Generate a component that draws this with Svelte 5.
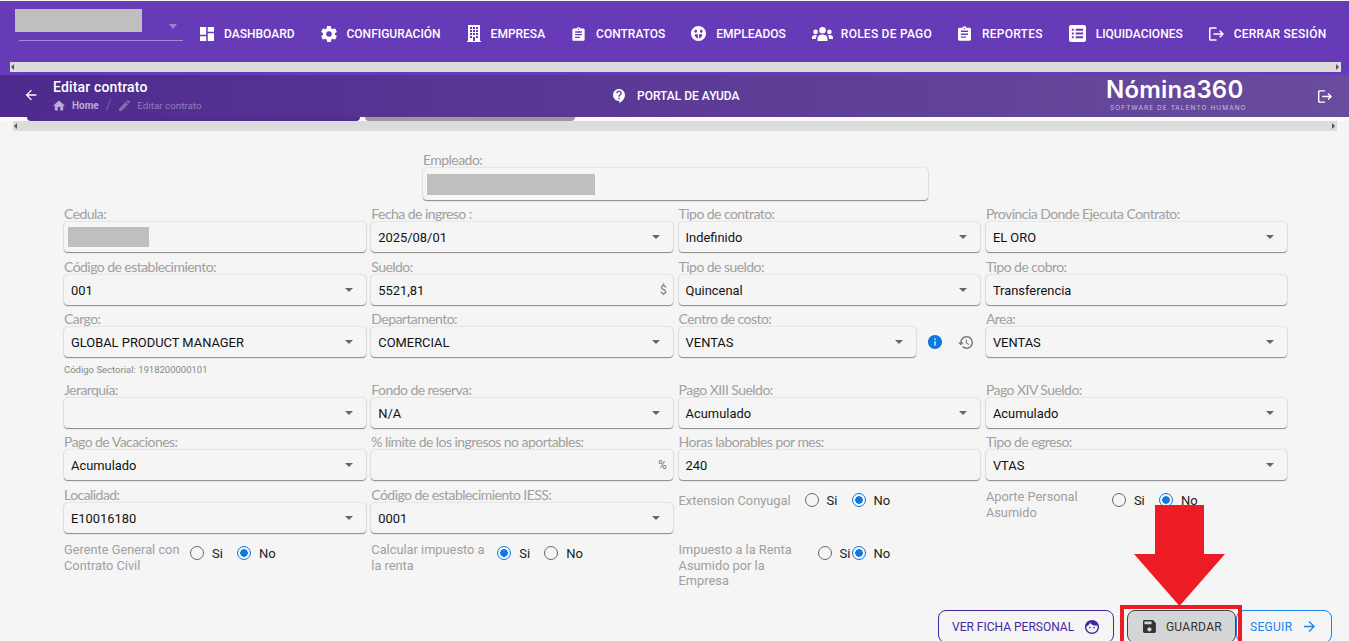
<script>
  const clipboard = "M19 3h-4.18C14.4 1.84 13.3 1 12 1s-2.4.84-2.82 2H5c-1.1 0-2 .9-2 2v14c0 1.1.9 2 2 2h14c1.1 0 2-.9 2-2V5c0-1.1-.9-2-2-2zm-7 0c.55 0 1 .45 1 1s-.45 1-1 1-1-.45-1-1 .45-1 1-1zm2 14H7v-2h7v2zm3-4H7v-2h10v2zm0-4H7V7h10v2z";

  const nav = [
    { key: "dashboard", label: "DASHBOARD", box: "3 3 18 18", w: 14, h: 14, d: "M3 13h8V3H3v10zm0 8h8v-6H3v6zm10 0h8V11h-8v10zm0-18v6h8V3h-8z" },
    { key: "config", label: "CONFIGURACIÓN", box: "2 2 20 20", w: 16, h: 16, d: "M12,15.5A3.5,3.5 0 0,1 8.5,12A3.5,3.5 0 0,1 12,8.5A3.5,3.5 0 0,1 15.5,12A3.5,3.5 0 0,1 12,15.5M19.43,12.97C19.47,12.65 19.5,12.33 19.5,12C19.5,11.67 19.47,11.34 19.43,11L21.54,9.37C21.73,9.22 21.78,8.95 21.66,8.73L19.66,5.27C19.54,5.05 19.27,4.96 19.05,5.05L16.56,6.05C16.04,5.66 15.5,5.32 14.87,5.07L14.5,2.42C14.46,2.18 14.25,2 14,2H10C9.75,2 9.54,2.18 9.5,2.42L9.13,5.07C8.5,5.32 7.96,5.66 7.44,6.05L4.95,5.05C4.73,4.96 4.46,5.05 4.34,5.27L2.34,8.73C2.21,8.95 2.27,9.22 2.46,9.37L4.57,11C4.53,11.34 4.5,11.67 4.5,12C4.5,12.33 4.53,12.65 4.57,12.97L2.46,14.63C2.27,14.78 2.21,15.05 2.34,15.27L4.34,18.73C4.46,18.95 4.73,19.03 4.95,18.95L7.44,17.94C7.96,18.34 8.5,18.68 9.13,18.93L9.5,21.58C9.54,21.82 9.75,22 10,22H14C14.25,22 14.46,21.82 14.5,21.58L14.87,18.93C15.5,18.67 16.04,18.34 16.56,17.94L19.05,18.95C19.27,19.03 19.54,18.95 19.66,18.73L21.66,15.27C21.78,15.05 21.73,14.78 21.54,14.63L19.43,12.97Z" },
    { key: "empresa", label: "EMPRESA", box: "0 0 14 17", w: 14, h: 17, d: "M1 0h12v16h1v1H0v-1h1V0zM3 2v2h2V2H3zm3 0v2h2V2H6zm3 0v2h2V2H9zM3 5v2h2V5H3zm3 0v2h2V5H6zm3 0v2h2V5H9zM3 8v2h2V8H3zm3 0v2h2V8H6zm3 0v2h2V8H9zM3 11v2h2v-2H3zm6 0v2h2v-2H9zM6 12v4h2v-4H6z" },
    { key: "contratos", label: "CONTRATOS", box: "1 1 22 20", w: 15, h: 14, d: clipboard },
    { key: "empleados", label: "EMPLEADOS", box: "2 2 20 20", w: 15, h: 15, d: "M12 2C6.48 2 2 6.48 2 12s4.48 10 10 10 10-4.48 10-10S17.52 2 12 2zM6.500 9c0-1.100.8-2 1.800-2s1.800.9 1.800 2-.8 2-1.800 2-1.800-.9-1.800-2zm7.400 0c0-1.100.8-2 1.800-2s1.800.9 1.800 2-.8 2-1.800 2-1.800-.9-1.800-2zM7 13h4.200v5.600C8.800 18 7 15.800 7 13zm5.800 0H17c0 2.800-1.800 5-4.200 5.600V13z" },
    { key: "roles", label: "ROLES DE PAGO", box: "0 0 21 14", w: 21, h: 14, gap: 8, wide: true, d: "M10.500 0a3.300 3.300 0 1 0 0 6.600 3.300 3.300 0 0 0 0-6.600zM3.600 2.600a2.300 2.300 0 1 0 0 4.600 2.300 2.300 0 0 0 0-4.600zm13.800 0a2.300 2.300 0 1 0 0 4.600 2.300 2.300 0 0 0 0-4.600zM10.500 7.500c-3 0-5 1.500-5 4V14h10v-2.500c0-2.500-2-4-5-4zM3 8c-1.800 0-3 1-3 2.500V12h4v-.6c0-1.200.3-2.200 1-3-.6-.3-1.200-.4-2-.4zm15 0c-.8 0-1.400.1-2 .4.7.8 1 1.800 1 3v.6h4v-1.500C21 9 19.800 8 18 8z" },
    { key: "reportes", label: "REPORTES", box: "3 1 18 20", w: 13, h: 15, gap: 11, wide: true, d: clipboard },
    { key: "liquidaciones", label: "LIQUIDACIONES", box: "3 3 18 18", w: 17, h: 17, d: "M19 3H5c-1.100 0-2 .9-2 2v14c0 1.100.9 2 2 2h14c1.100 0 2-.9 2-2V5c0-1.100-.9-2-2-2zM6 7v2h2V7H6zm4 0v2h8V7h-8zm-4 4v2h2v-2H6zm4 0v2h8v-2h-8zm-4 4v2h2v-2H6zm4 0v2h8v-2h-8z" },
    { key: "salir", label: "CERRAR SESIÓN", box: "2 3 20 18", w: 15, h: 14, wide: true, d: "M17 7l-1.410 1.410L18.170 11H8v2h10.170l-2.580 2.580L17 17l5-5zM4 5h8V3H4c-1.100 0-2 .9-2 2v14c0 1.100.9 2 2 2h8v-2H4V5z" },
  ];

  // filas del formulario, en orden de la grilla
  const fields = [
    { label: "Cedula:", type: "blank", blank: 81 },
    { label: "Fecha de ingreso :", value: "2025/08/01", type: "select" },
    { label: "Tipo de contrato:", value: "Indefinido", type: "select" },
    { label: "Provincia Donde Ejecuta Contrato:", value: "EL ORO", type: "select" },

    { label: "Código de establecimiento:", value: "001", type: "select" },
    { label: "Sueldo:", value: "5521,81", suffix: "$" },
    { label: "Tipo de sueldo:", value: "Quincenal", type: "select" },
    { label: "Tipo de cobro:", value: "Transferencia" },

    { label: "Cargo:", value: "GLOBAL PRODUCT MANAGER", type: "select", note: "Código Sectorial: 1918200000101" },
    { label: "Departamento:", value: "COMERCIAL", type: "select" },
    { label: "Centro de costo:", value: "VENTAS", type: "select", tools: true },
    { label: "Area:", value: "VENTAS", type: "select" },

    { label: "Jerarquía:", value: "", type: "select" },
    { label: "Fondo de reserva:", value: "N/A", type: "select" },
    { label: "Pago XIII Sueldo:", value: "Acumulado", type: "select" },
    { label: "Pago XIV Sueldo:", value: "Acumulado", type: "select" },

    { label: "Pago de Vacaciones:", value: "Acumulado", type: "select" },
    { label: "% límite de los ingresos no aportables:", value: "", suffix: "%" },
    { label: "Horas laborables por mes:", value: "240" },
    { label: "Tipo de egreso:", value: "VTAS", type: "select" },

    { label: "Localidad:", value: "E10016180", type: "select" },
    { label: "Código de establecimiento IESS:", value: "0001", type: "select" },
    { label: "Extension Conyugal", type: "radio", checked: "No", single: true },
    { label: "Aporte Personal Asumido", type: "radio", checked: "No" },

    { label: "Gerente General con Contrato Civil", type: "radio", checked: "No" },
    { label: "Calcular impuesto a la renta", type: "radio", checked: "Si" },
    { label: "Impuesto a la Renta Asumido por la Empresa", type: "radio", checked: "No", tight: true },
  ];
</script>

<div class="page">
  <header class="topbar">
    <div class="nav">
      <div class="company">
        <span class="company-name"></span>
        <span class="company-caret"></span>
      </div>
      {#each nav as item}
        <a class="nav-item" class:wide={item.wide} style="gap: {item.gap ?? 10}px" href="#{item.key}">
          <svg viewBox={item.box} width={item.w} height={item.h} fill="currentColor" fill-rule="evenodd"><path d={item.d} /></svg>
          {item.label}
        </a>
      {/each}
    </div>
    <div class="hscroll top"><i class="left"></i><i class="right"></i></div>
  </header>

  <section class="subbar">
    <svg class="back" viewBox="0 0 24 24" width="16" height="16" fill="currentColor"><path d="M20 11H7.830l5.590-5.590L12 4l-8 8 8 8 1.410-1.410L7.830 13H20v-2z" /></svg>
    <div class="crumbs">
      <div class="title">Editar contrato</div>
      <div class="trail">
        <svg viewBox="2 3 20 17" width="12" height="11" fill="currentColor"><path d="M10 20v-6h4v6h5v-8h3L12 3 2 12h3v8z" /></svg>
        <span class="home">Home</span>
        <span class="slash">/</span>
        <svg class="dim" viewBox="3 3 18 18" width="11" height="11" fill="currentColor"><path d="M3 17.250V21h3.750L17.810 9.940l-3.750-3.750L3 17.250zM20.710 7.040c.39-.39.39-1.020 0-1.410l-2.340-2.340c-.39-.39-1.020-.39-1.410 0l-1.830 1.830 3.750 3.750 1.830-1.830z" /></svg>
        <span class="current">Editar contrato</span>
      </div>
    </div>
    <div class="help">
      <svg viewBox="3 2 17 20" width="12" height="14" fill="currentColor" fill-rule="evenodd"><path d="M11.500 2C6.810 2 3 5.810 3 10.500S6.810 19 11.500 19h.5v3c4.860-2.340 8-7 8-11.500C20 5.810 16.190 2 11.500 2zm1 14.500h-2v-2h2v2zm0-3.500h-2c0-3.250 3-3 3-5 0-1.100-.9-2-2-2s-2 .9-2 2h-2c0-2.210 1.790-4 4-4s4 1.790 4 4c0 2.500-3 2.750-3 5z" /></svg>
      PORTAL DE AYUDA
    </div>
    <div class="logo">
      <div class="logo-name">Nómina360</div>
      <div class="logo-tag">SOFTWARE DE TALENTO HUMANO</div>
    </div>
    <svg class="exit" viewBox="2 3 20 18" width="14" height="13" fill="currentColor"><path d="M17 7l-1.410 1.410L18.170 11H8v2h10.170l-2.580 2.580L17 17l5-5zM4 5h8V3H4c-1.100 0-2 .9-2 2v14c0 1.100.9 2 2 2h8v-2H4V5z" /></svg>
  </section>

  <div class="tabs"><span class="tab active"></span><span class="tab"></span></div>
  <div class="hscroll second"><i class="left"></i><i class="right"></i></div>

  <main class="form">
    <div class="employee">
      <div class="label">Empleado:</div>
      <div class="box tall"><span class="blank employee-blank"></span></div>
    </div>

    <div class="grid">
      {#each fields as f, i}
        {#if f.type === "radio"}
          <div class="radio-field" class:single={f.single}>
            <div class="radio-label" class:wide={f.tight}>{f.label}</div>
            {#each ["Si", "No"] as opt}
              <label class="option" class:tight={f.tight}>
                <input type="radio" name="r{i}" value={opt} checked={f.checked === opt} />
                {opt}
              </label>
            {/each}
          </div>
        {:else}
          <div class="field">
            <div class="label">{f.label}</div>
            <div class="control">
              <div class="box" class:narrow={f.tools}>
                {#if f.type === "blank"}
                  <span class="blank" style="width: {f.blank}px"></span>
                {:else}
                  <span class="value">{f.value}</span>
                {/if}
                {#if f.type === "select"}<span class="caret"></span>{/if}
                {#if f.suffix}<span class="suffix">{f.suffix}</span>{/if}
              </div>
              {#if f.tools}
                <svg class="info" viewBox="2 2 20 20" width="14" height="14" fill="currentColor"><path d="M12 2C6.480 2 2 6.480 2 12s4.480 10 10 10 10-4.480 10-10S17.520 2 12 2zm1 15h-2v-6h2v6zm0-8h-2V7h2v2z" /></svg>
                <svg class="history" viewBox="1 3 21 18" width="15" height="13" fill="currentColor"><path d="M13 3c-4.970 0-9 4.030-9 9H1l3.890 3.890.07.14L9 12H6c0-3.870 3.130-7 7-7s7 3.130 7 7-3.130 7-7 7c-1.930 0-3.680-.79-4.940-2.060l-1.420 1.420C8.270 19.990 10.510 21 13 21c4.970 0 9-4.030 9-9s-4.030-9-9-9zm-1 5v5l4.280 2.540.72-1.210-3.500-2.080V8H12z" /></svg>
              {/if}
            </div>
            {#if f.note}<div class="note">{f.note}</div>{/if}
          </div>
        {/if}
      {/each}
    </div>

    <div class="actions">
      <button class="btn ficha">
        VER FICHA PERSONAL
        <svg viewBox="2 2 20 20" width="14" height="14" fill="currentColor"><path d="M9 11.750c-.69 0-1.250.56-1.250 1.250s.56 1.250 1.250 1.250 1.250-.56 1.250-1.250-.56-1.250-1.250-1.250zm6 0c-.69 0-1.250.56-1.250 1.250s.56 1.250 1.250 1.250 1.250-.56 1.250-1.250-.56-1.250-1.250-1.250zM12 2C6.480 2 2 6.480 2 12s4.480 10 10 10 10-4.480 10-10S17.520 2 12 2zm0 18c-4.410 0-8-3.590-8-8 0-.29.02-.58.05-.86 2.360-1.050 4.230-2.980 5.210-5.370C11.070 8.330 14.050 10 17.420 10c.78 0 1.530-.09 2.250-.26.21.71.33 1.470.33 2.260 0 4.410-3.590 8-8 8z" /></svg>
      </button>
      <button class="btn guardar">
        <svg viewBox="3 3 18 18" width="13" height="13" fill="currentColor"><path d="M17 3H5c-1.110 0-2 .9-2 2v14c0 1.100.89 2 2 2h14c1.100 0 2-.9 2-2V7l-4-4zm-5 16c-1.660 0-3-1.340-3-3s1.340-3 3-3 3 1.340 3 3-1.340 3-3 3zm3-10H5V5h10v4z" /></svg>
        GUARDAR
      </button>
      <button class="btn seguir">
        SEGUIR
        <svg viewBox="4 4 16 16" width="11" height="11" fill="currentColor"><path d="M12 4l-1.410 1.410L16.170 11H4v2h12.170l-5.580 5.590L12 20l8-8z" /></svg>
      </button>
    </div>
  </main>

  <!-- anotacion roja sobre el boton guardar -->
  <div class="mark-box"></div>
  <svg class="mark-arrow" viewBox="0 0 91 101" width="91" height="101"><path d="M21 0h49v49h21L45.500 101 0 49h21z" fill="#ed1c24" /></svg>
</div>

<style>
  :global(body) {
    margin: 0;
    background: #f5f5f5;
  }
  .page {
    position: relative;
    height: 641px;
    overflow: hidden;
    font-family: Roboto, "Liberation Sans", sans-serif;
    background: #f5f5f5;
  }
  .topbar {
    height: 74px;
    border-top: 1px solid #f5f5f5;
    background: #673ab7;
  }
  .nav {
    display: flex;
    align-items: center;
    height: 61px;
    padding-left: 15px;
    box-sizing: border-box;
  }
  .company {
    position: relative;
    flex: none;
    width: 168px;
    height: 40px;
    margin: 8px 17px 0 0;
    align-self: flex-start;
  }
  .company-name {
    display: block;
    width: 127px;
    height: 23px;
    background: #bfbfbf;
  }
  .company-caret {
    position: absolute;
    top: 15px;
    left: 154px;
    border: 4.5px solid transparent;
    border-top: 5px solid #9a85c6;
    border-bottom: 0;
  }
  .company::after {
    content: "";
    position: absolute;
    left: 4px;
    right: 0;
    top: 31px;
    height: 1px;
    background: #a08dca;
  }
  .nav-item {
    display: flex;
    align-items: center;
    margin-right: 26px;
    color: #fff;
    font-size: 12px;
    font-weight: 500;
    text-decoration: none;
    white-space: nowrap;
    position: relative;
    top: 2px;
  }
  .nav-item.wide {
    letter-spacing: 0.24px;
  }
  .hscroll {
    position: relative;
    height: 10px;
    background: #dcdcdc;
  }
  .hscroll.top {
    margin: 0 8px 0 10px;
  }
  .hscroll.second {
    margin: 0 12px 0 13px;
  }
  .hscroll i {
    position: absolute;
    top: 2px;
    border: 3px solid transparent;
  }
  .hscroll .left {
    left: 0;
    border-left: 0;
    border-right: 3px solid #555;
    margin-left: 1px;
  }
  .hscroll .right {
    right: 0;
    border-right: 0;
    border-left: 3px solid #555;
    margin-right: 2px;
  }
  .subbar {
    display: flex;
    align-items: center;
    height: 42px;
    padding-left: 23px;
    color: #fff;
    background: linear-gradient(90deg, #4e2a8e, #694c9d);
  }
  .back {
    flex: none;
    margin: -2px 14px 0 0;
  }
  .crumbs {
    width: 560px;
    flex: none;
  }
  .title {
    font-size: 14px;
    font-weight: 500;
    letter-spacing: 0.15px;
    line-height: 16px;
  }
  .trail {
    display: flex;
    align-items: center;
    gap: 7px;
    margin-top: 2px;
    font-size: 10px;
    color: #b9aadb;
  }
  .home {
    font-weight: 700;
  }
  .slash {
    color: #8470ac;
    font-size: 14px;
    font-weight: 300;
    margin-right: 1px;
  }
  .dim {
    color: #8470ac;
  }
  .current {
    color: #8f7dba;
    font-size: 9.800px;
  }
  .help {
    display: flex;
    align-items: center;
    gap: 12px;
    width: 493px;
    flex: none;
    font-size: 12px;
    font-weight: 500;
  }
  .logo {
    flex: none;
    width: 212px;
    margin-bottom: 4px;
  }
  .logo-name {
    font-family: Inter, "Open Sans", sans-serif;
    font-size: 24px;
    font-weight: 600;
    letter-spacing: 0.2px;
    line-height: 22px;
  }
  .logo-tag {
    font-family: Inter, "Open Sans", sans-serif;
    font-size: 6.500px;
    line-height: 8px;
    letter-spacing: 1.050px;
    margin: 3px 0 -2px 4px;
    color: #c9bfe0;
    white-space: nowrap;
  }
  .exit {
    flex: none;
  }
  .tabs {
    display: flex;
    gap: 5px;
    height: 4px;
    padding-left: 27px;
    background: #fbfbfb;
  }
  .tab {
    width: 210px;
    background: #9a9a9a;
    border-radius: 0 0 6px 6px;
  }
  .tab.active {
    width: 333px;
    background: #4f2c8f;
  }
  .form {
    padding: 22px 62px 0 64px;
  }
  .employee {
    width: 505px;
    margin: 0 0 7px 359px;
  }
  .label {
    height: 15px;
    font-family: Lato, sans-serif;
    font-size: 14px;
    letter-spacing: -0.55px;
    line-height: 13px;
    color: #a0a0a0;
    white-space: nowrap;
  }
  .grid {
    display: grid;
    grid-template-columns: repeat(4, 301.500px);
    grid-template-rows: 53px 52px 71px 52px 53px 53px auto;
    column-gap: 5.800px;
  }
  .control {
    display: flex;
    align-items: center;
  }
  .box {
    display: flex;
    align-items: center;
    flex: 1;
    height: 30px;
    padding: 0 7px;
    box-sizing: border-box;
    border-radius: 4px;
    background: #f5f5f5;
    box-shadow: 0 1px 1px #8a8a8a, 0 0 2px rgba(0, 0, 0, 0.22);
  }
  .box.tall {
    height: 32px;
    padding: 0 4px;
  }
  .box.narrow {
    flex: none;
    width: 237px;
  }
  .blank {
    height: 20px;
    background: #bfbfbf;
    margin-left: -3px;
  }
  .employee-blank {
    width: 168px;
    height: 21px;
    margin-left: 0;
  }
  .value {
    flex: 1;
    font-size: 12.900px;
    color: #111;
    white-space: nowrap;
  }
  .caret {
    flex: none;
    margin-right: 6px;
    border: 4.500px solid transparent;
    border-top: 4px solid #666;
    border-bottom: 0;
  }
  .suffix {
    flex: none;
    font-size: 12px;
    color: #777;
    margin-right: -1px;
  }
  .info {
    flex: none;
    margin-left: 12px;
    color: #0b78e3;
  }
  .history {
    flex: none;
    margin-left: 16px;
    margin-right: 7px;
    color: #777;
  }
  .note {
    margin-top: 7px;
    font-size: 9.500px;
    color: #888;
  }
  .radio-field {
    display: flex;
    align-items: flex-start;
    padding-top: 1px;
  }
  .radio-label {
    flex: none;
    width: 126px;
    font-size: 12.800px;
    line-height: 15.500px;
    color: #a0a0a0;
  }
  .radio-label.wide {
    width: 139px;
  }
  .radio-field.single .radio-label {
    padding-top: 4px;
    white-space: nowrap;
  }
  .option {
    flex: none;
    display: flex;
    align-items: center;
    gap: 8px;
    width: 47px;
    height: 14px;
    margin-top: 4px;
    font-size: 13px;
    color: #222;
  }
  .option.tight {
    width: 34px;
  }
  input[type="radio"] {
    appearance: none;
    flex: none;
    width: 14px;
    height: 14px;
    margin: 0;
    border: 1.500px solid #666;
    border-radius: 50%;
    box-sizing: border-box;
  }
  input[type="radio"]:checked {
    border-color: #0b78e3;
    background: radial-gradient(circle, #0b78e3 3.500px, transparent 4px);
  }
  .actions {
    display: flex;
    justify-content: flex-end;
    margin: 21.500px -45px 0 0;
  }
  .btn {
    display: flex;
    align-items: center;
    height: 33px;
    padding: 0 13px;
    box-sizing: border-box;
    border-radius: 8px;
    font-family: inherit;
    font-size: 12px;
    font-weight: 400;
    background: transparent;
  }
  .btn.ficha {
    gap: 11px;
    width: 176px;
    margin-right: 13px;
    border: 1px solid #4527a0;
    color: #4527a0;
  }
  .btn.guardar {
    gap: 10px;
    width: 109px;
    border: 1px solid #444;
    background: #d4d5d7;
    color: #333;
    padding-left: 15px;
    letter-spacing: 0.3px;
  }
  .btn.seguir {
    gap: 12px;
    width: 96px;
    border: 1px solid #1b84e6;
    color: #1b84e6;
    letter-spacing: 0.3px;
  }
  .mark-box {
    position: absolute;
    left: 1120px;
    top: 605px;
    width: 122px;
    height: 44px;
    border: 4px solid #ed1c24;
    box-sizing: border-box;
  }
  .mark-arrow {
    position: absolute;
    left: 1134px;
    top: 505px;
  }
</style>
